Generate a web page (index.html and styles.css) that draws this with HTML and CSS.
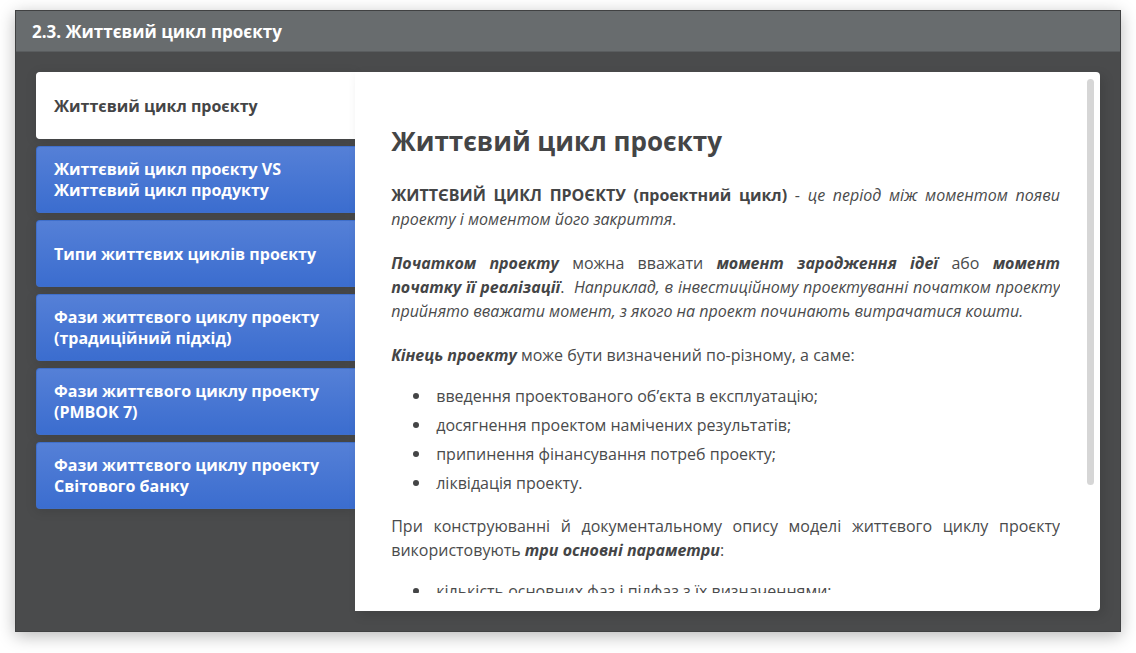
FILE: index.html
```html
<!DOCTYPE html>
<html lang="uk">
<head>
<meta charset="utf-8">
<meta name="viewport" content="width=device-width, initial-scale=1">
<title>2.3. Життєвий цикл проєкту</title>
<link rel="stylesheet" href="styles.css">
</head>
<body>
<main class="player">
  <header class="player-header">2.3. Життєвий цикл проєкту</header>
  <div class="workspace">
    <div class="tabs" role="tablist" aria-orientation="vertical">
      <button class="tab tab-active" id="tab-1" type="button" role="tab" aria-selected="true" aria-controls="panel">Життєвий цикл проєкту</button>
      <button class="tab" type="button" role="tab" aria-selected="false">Життєвий цикл проєкту VS Життєвий цикл продукту</button>
      <button class="tab" type="button" role="tab" aria-selected="false">Типи життєвих циклів проєкту</button>
      <button class="tab" type="button" role="tab" aria-selected="false">Фази життєвого циклу проекту (традиційний підхід)</button>
      <button class="tab" type="button" role="tab" aria-selected="false">Фази життєвого циклу проекту (РМВОК 7)</button>
      <button class="tab" type="button" role="tab" aria-selected="false">Фази життєвого циклу проекту Світового банку</button>
    </div>
    <section class="panel" id="panel" role="tabpanel" aria-labelledby="tab-1">
      <article class="content">
        <h1>Життєвий цикл проєкту</h1>
        <p><strong>ЖИТТЄВИЙ ЦИКЛ ПРОЄКТУ (проектний цикл)</strong> - <em>це період між моментом появи проекту і моментом його закриття</em>.</p>
        <p><strong><em>Початком проекту</em></strong> можна вважати <strong><em>момент зародження ідеї</em></strong> або <strong><em>момент початку її реалізації</em></strong>.&nbsp; <em>Наприклад, в інвестиційному проектуванні початком проекту прийнято вважати момент, з якого на проект починають витрачатися кошти.</em></p>
        <p><strong><em>Кінець проекту</em></strong> може бути визначений по-різному, а саме:</p>
        <ul>
          <li>введення проектованого об’єкта в експлуатацію;</li>
          <li>досягнення проектом намічених результатів;</li>
          <li>припинення фінансування потреб проекту;</li>
          <li>ліквідація проекту.</li>
        </ul>
        <p>При конструюванні й документальному опису моделі життєвого циклу проєкту використовують <strong><em>три основні параметри</em></strong>:</p>
        <ul>
          <li>кількість основних фаз і підфаз з їх визначеннями;</li>
        </ul>
      </article>
      <div class="scroll-track"><div class="scroll-thumb"></div></div>
    </section>
  </div>
</main>
</body>
</html>
```
FILE: styles.css
```css
* {
  box-sizing: border-box;
}

body {
  margin: 0;
  height: 100vh;
  padding: 10px 15px 21px;
  display: flex;
  background: #fff;
  color: #4a4b4c;
  font-family: "Open Sans", "Noto Sans", sans-serif;
  font-size: 16px;
  line-height: 24px;
}

.player {
  flex: 1;
  min-width: 0;
  display: flex;
  flex-direction: column;
  background: #4a4b4c;
  border: 1px solid #404142;
  box-shadow: 0 4px 16px rgba(0, 0, 0, 0.28);
}

.player-header {
  padding: 9px 16px 7px;
  background: #686c6e;
  border-bottom: 1px solid #5a5d5f;
  color: #fff;
  font-size: 17px;
  font-weight: 700;
}

.workspace {
  flex: 1;
  min-height: 0;
  display: grid;
  grid-template-columns: 3fr 7fr;
  padding: 20px;
}

.tabs {
  display: flex;
  flex-direction: column;
  gap: 7px;
}

.tab {
  min-height: 67px;
  padding: 11px 17px 10px;
  border: 1px solid #3f6fcb;
  border-right: 0;
  border-radius: 4px 0 0 4px;
  background: linear-gradient(#5580d7, #3b6dcf);
  box-shadow: 0 2px 12px rgba(0, 0, 0, 0.12);
  color: #fff;
  font: 700 16px/21px "Open Sans", "Noto Sans", sans-serif;
  text-align: left;
  cursor: pointer;
}

.tab-active {
  background: #fff;
  border-color: #fff;
  color: #444546;
}

.panel {
  min-height: 0;
  display: flex;
  padding: 7px 6px 18px 36px;
  background: #fff;
  border-radius: 0 4px 4px 0;
  box-shadow: 4px 4px 12px rgba(0, 0, 0, 0.12);
}

.content {
  flex: 1;
  min-width: 0;
  overflow-y: auto;
  margin-right: 27px;
  padding-top: 44px;
  scrollbar-width: none;
}

.content h1 {
  margin: 0 0 24px;
  color: #444546;
  font-size: 26px;
  font-weight: 700;
  line-height: 36px;
}

.content strong {
  color: #444546;
}

.content p {
  margin: 0 0 20px;
  text-align: justify;
}

.content ul {
  margin: -3px 0 19px;
  padding-left: 22px;
  list-style: none;
}

.content li {
  display: flex;
  align-items: center;
  gap: 17px;
}

.content li::before {
  content: "";
  width: 6px;
  height: 6px;
  border-radius: 50%;
  background: #444546;
}

.content li + li {
  margin-top: 5px;
}

.scroll-track {
  width: 7px;
}

.scroll-thumb {
  height: 79%;
  border-radius: 4px;
  background: #d6d6d6;
}
```
